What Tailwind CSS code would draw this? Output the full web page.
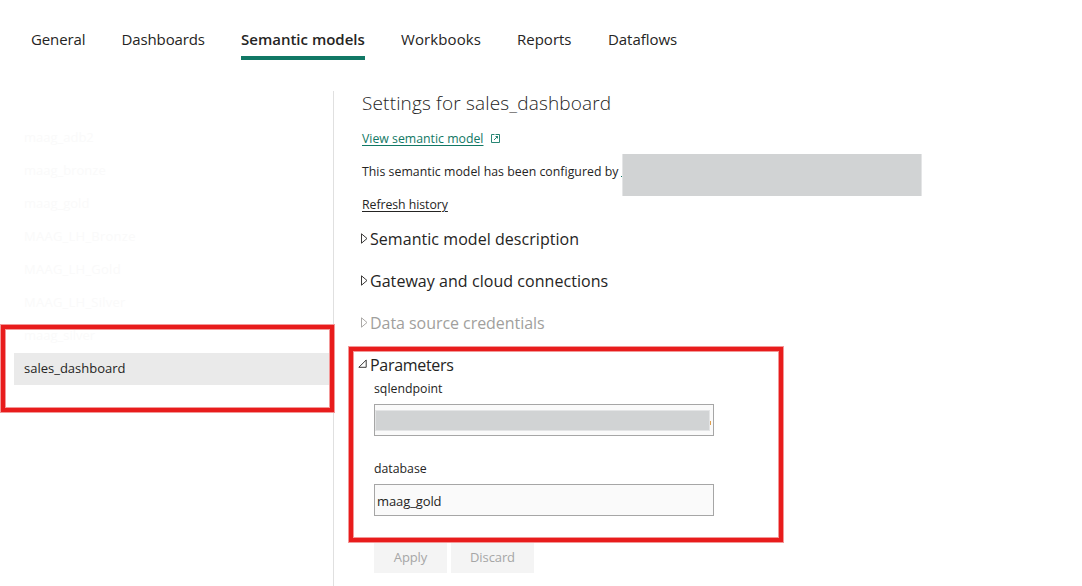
<!DOCTYPE html>
<html lang="en">
<head>
<meta charset="utf-8">
<title>Settings</title>
<script src="https://cdn.jsdelivr.net/npm/@tailwindcss/browser@4"></script>
</head>
<body class="relative h-[586px] w-[1082px] overflow-hidden bg-white font-['Open_Sans','Noto_Sans',sans-serif] text-[13px] leading-5 text-[#252423]">
<nav class="flex h-[91px] gap-9 pl-[31px] pt-[27px] text-[15px] leading-6 whitespace-nowrap">
  <div class="h-[33px] w-[54.5px] tracking-[-0.12px]">General</div>
  <div class="h-[33px] w-[83.5px] tracking-[-0.12px]">Dashboards</div>
  <div class="h-[33px] w-[124px] border-b-4 border-[#117865] font-semibold">Semantic models</div>
  <div class="h-[33px] w-[80px] tracking-[0.1px]">Workbooks</div>
  <div class="h-[33px] w-[55px]">Reports</div>
  <div class="h-[33px] w-[70px] tracking-[-0.05px]">Dataflows</div>
</nav>
<div class="flex h-[495px]">
  <aside class="flex w-[334px] shrink-0 flex-col gap-px border-r border-[#e0e0e0] pl-[14px] pt-[31px] text-[#fafafa]">
    <div class="flex h-8 items-center pb-[2px] pl-[10px]">maag_adb2</div>
    <div class="flex h-8 items-center pb-[2px] pl-[10px]">maag_bronze</div>
    <div class="flex h-8 items-center pb-[2px] pl-[10px]">maag_gold</div>
    <div class="flex h-8 items-center pb-[2px] pl-[10px] tracking-[0.25px]">MAAG_LH_Bronze</div>
    <div class="flex h-8 items-center pb-[2px] pl-[10px] tracking-[0.25px]">MAAG_LH_Gold</div>
    <div class="flex h-8 items-center pb-[2px] pl-[10px] tracking-[0.25px]">MAAG_LH_Silver</div>
    <div class="flex h-8 items-center pb-[2px] pl-[10px]">maag_silver</div>
    <div class="flex h-8 items-center bg-[#eaeaea] pb-[2px] pl-[10px] text-[#252423]">sales_dashboard</div>
  </aside>
  <main class="flex-1 pl-7 text-[12.3px] leading-[22px] whitespace-nowrap">
    <h1 class="h-[37px] text-[19px] leading-[25px] font-light tracking-[0.16px]">Settings for sales_dashboard</h1>
    <div class="flex h-[33px] items-start text-[#117865]"><a class="w-[122px] underline underline-offset-2">View semantic model</a>
      <svg class="mt-[6px] ml-[7px] size-[9px] shrink-0" viewBox="0 0 9 9" fill="none" stroke="currentColor" stroke-width=".9"><path d="M3.5.5h-3v8h8v-8H4.5M4.5 2.5h2v2M6.6 2.4 3 6"/></svg></div>
    <div class="flex h-[33px] tracking-[0.03px]"><span class="w-[259px]">This semantic model has been configured by</span><i class="mt-[15px] h-px w-[2px] bg-[#117865]"></i></div>
    <div class="h-[25px]"><a class="tracking-[-0.05px] underline underline-offset-2">Refresh history</a></div>
    <div class="flex h-[42px] items-start text-[16px] leading-10"><svg class="mt-[14px] -ml-[1px] mr-[2px] h-[11px] w-[7px]" viewBox="0 0 7 11" fill="none" stroke="currentColor" stroke-width=".9"><path d="M.5.8v9.4l5.5-4.7z"/></svg><span class="tracking-[0.05px]">Semantic model description</span></div>
    <div class="flex h-[42px] items-start text-[16px] leading-10"><svg class="mt-[14px] -ml-[1px] mr-[2px] h-[11px] w-[7px]" viewBox="0 0 7 11" fill="none" stroke="currentColor" stroke-width=".9"><path d="M.5.8v9.4l5.5-4.7z"/></svg><span class="tracking-[0.05px]">Gateway and cloud connections</span></div>
    <div class="flex h-[42px] items-start text-[16px] leading-10 text-[#a19f9d]"><svg class="mt-[14px] -ml-[1px] mr-[2px] h-[11px] w-[7px]" viewBox="0 0 7 11" fill="none" stroke="currentColor" stroke-width=".9"><path d="M.5.8v9.4l5.5-4.7z"/></svg><span class="tracking-[-0.05px]">Data source credentials</span></div>
    <div class="flex h-[33px] items-start text-[16px] leading-10"><svg class="mt-[14px] -ml-[4px] mr-[3px] size-[9px]" viewBox="0 0 9 9" fill="none" stroke="currentColor" stroke-width=".9"><path d="M.8 8.3h7.4V1z"/></svg><span class="tracking-[-0.3px]">Parameters</span></div>
    <div class="pl-3">
      <label class="block h-[26px]">sqlendpoint</label>
      <div class="flex h-8 w-[340px] border border-[#a6a6a6] bg-[#fafafa] pt-[5px]"><div class="h-[21px] w-[335px] border border-[#e4e5e6] bg-[#d1d3d4]"></div><i class="mt-[11px] h-1 w-px bg-[#e0a050]"></i></div>
      <label class="mt-[22px] block h-[26px]">database</label>
      <div class="flex h-8 w-[340px] items-center border border-[#a6a6a6] bg-[#fafafa] pt-[2px] pl-[2px] text-[13px] leading-5 tracking-[-0.1px]">maag_gold</div>
      <div class="mt-[25px] flex gap-1 text-[13px] leading-5 tracking-[-0.1px] text-[#a6a6a6]">
        <div class="flex h-8 w-[73px] items-center justify-center bg-[#f4f4f4]">Apply</div>
        <div class="flex h-8 w-[83px] items-center justify-center bg-[#f4f4f4]">Discard</div>
      </div>
    </div>
  </main>
</div>
<div class="absolute top-[154px] left-[622px] h-[42px] w-[300px] border-x border-[#e4e5e6] bg-[#d1d3d4]"></div>
<div class="absolute top-[324px] left-0 h-[89px] w-[335px] border border-[#f39898]"><div class="h-full border-4 border-[#e81c1c]"><div class="h-full border border-[#f39898]"></div></div></div>
<div class="absolute top-[346px] left-[348px] h-[197px] w-[436px] border border-[#f39898]"><div class="h-full border-4 border-[#e81c1c]"><div class="h-full border border-[#f39898]"></div></div></div>
</body>
</html>
